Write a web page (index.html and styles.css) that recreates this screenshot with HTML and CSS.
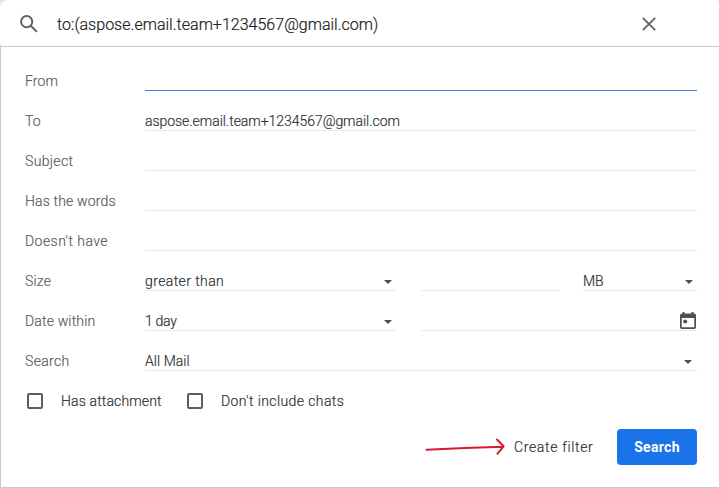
FILE: index.html
```html
<!DOCTYPE html>
<html lang="en">
<head>
<meta charset="utf-8">
<title>Search mail</title>
<link rel="stylesheet" href="styles.css">
</head>
<body>
<header class="searchbar">
  <svg class="icon-search" viewBox="0 0 18 18"><circle cx="6.7" cy="6.7" r="5.6"/><path d="M10.8 10.8L16.9 16.9"/></svg>
  <span class="query">to:(aspose.email.team+1234567@gmail.com)</span>
  <svg class="icon-close" viewBox="0 0 14 14"><path d="M.8.8L13.2 13.2M13.2.8L.8 13.2"/></svg>
</header>
<main class="panel">
  <div class="row"><label class="from">From</label><div class="field active"></div></div>
  <div class="row"><label class="to">To</label><div class="field"><span class="address">aspose.email.team+1234567@gmail.com</span></div></div>
  <div class="row"><label class="subject">Subject</label><div class="field"></div></div>
  <div class="row"><label class="words">Has the words</label><div class="field"></div></div>
  <div class="row"><label class="without">Doesn't have</label><div class="field"></div></div>
  <div class="row"><label class="size">Size</label>
    <div class="field medium"><span class="greater">greater than</span><i class="caret"></i></div>
    <div class="field amount"></div>
    <div class="field unit"><span class="mb">MB</span><i class="caret"></i></div>
  </div>
  <div class="row"><label class="date">Date within</label>
    <div class="field medium"><span class="day">1 day</span><i class="caret"></i></div>
    <div class="field calendar"><svg class="icon-calendar" viewBox="0 0 16 17"><path fill-rule="evenodd" d="M2.5 0h2v1.6h7V0h2v1.6h.7Q16 1.6 16 3.4v11.8Q16 17 14.2 17H1.8Q0 17 0 15.2V3.4Q0 1.600 1.800 1.600h.7zM1.700 6v9.300h12.600V6z"/><circle cx="5.200" cy="9.500" r="2"/></svg></div>
  </div>
  <div class="row"><label class="search-in">Search</label><div class="field"><span class="all">All Mail</span><i class="caret wide"></i></div></div>
  <div class="checks">
    <span class="box"></span><span class="attachment">Has attachment</span>
    <span class="box second"></span><span class="chats">Don't include chats</span>
  </div>
  <div class="actions">
    <svg class="arrow" viewBox="0 0 82 20"><path d="M1.500 12.800Q40 10.800 78 9.800M72 2.500L78.600 9.300L72.500 16.700"/></svg>
    <span class="create">Create filter</span>
    <button class="submit"><span>Search</span></button>
  </div>
</main>
</body>
</html>
```
FILE: styles.css
```css
* { box-sizing: border-box; }
body {
  margin: 0;
  width: 719px;
  height: 488px;
  overflow: hidden;
  background: #e6e7e8;
  color: #303236;
  font: 300 14px/20px Roboto, "Liberation Sans", sans-serif;
  -webkit-text-stroke: .2px currentColor;
}
svg { display: block; fill: none; }
span, label { white-space: nowrap; }
.searchbar {
  display: flex;
  align-items: center;
  height: 46px;
  padding: 2px 63px 0 20px;
  border-radius: 8px 4px 0 4px;
  background: #fff;
}
.icon-search { width: 18px; height: 18px; stroke: #5f6368; stroke-width: 2; }
.query { margin-left: 19px; padding-top: 1px; font-size: 16px; letter-spacing: .02px; color: #202124; }
.icon-close { width: 14px; height: 14px; margin-left: auto; stroke: #5f6368; stroke-width: 1.8; }
.panel {
  height: 442px;
  padding: 14px 22px 0 24px;
  border: solid #c7c8c9;
  border-width: 1px 0 1px 1px;
  background: #fff;
}
.row { display: flex; height: 40px; }
.row label { width: 120px; padding-top: 10px; color: #5a5e63; letter-spacing: .16px; }
.row .subject, .row .search-in { letter-spacing: .35px; }
.row .without { letter-spacing: .45px; }
.field {
  display: flex;
  align-items: center;
  flex: 1;
  height: 30px;
  padding-top: 11px;
  border-bottom: 1px solid #e9eaeb;
}
.field.active { border-bottom-color: #3f83d6; }
.field.medium { flex: 0 0 251px; margin-right: 25px; }
.field.amount { flex: 0 0 139px; margin-right: 23px; }
.field.calendar { align-items: flex-start; justify-content: flex-end; }
.address { letter-spacing: -.04px; }
.greater { letter-spacing: .4px; }
.day { letter-spacing: -.3px; }
.all { letter-spacing: .05px; }
.caret {
  margin: 1px 4px 0 auto;
  border: solid transparent;
  border-width: 4px 4.500px 0;
  border-top-color: #4d5053;
}
.caret.wide { margin-right: 5px; }
.icon-calendar { width: 16px; height: 17px; margin: 0 1px 0 0; fill: #4d5053; }
.checks { display: flex; align-items: center; height: 20px; margin: 10px 0 0 2px; }
.box { width: 16px; height: 16px; border: 2px solid #5b5d60; border-radius: 2px; }
.box + span { margin-left: 18px; }
.attachment { width: 126px; letter-spacing: .14px; }
.chats { letter-spacing: .4px; }
.actions { display: flex; align-items: center; justify-content: flex-end; height: 36px; margin-top: 18px; }
.arrow { width: 82px; height: 20px; margin-right: 7px; stroke: #d9192f; stroke-width: 2; stroke-linecap: round; stroke-linejoin: round; }
.create { width: 79px; margin-right: 24px; letter-spacing: .65px; }
.submit { width: 80px; height: 36px; padding: 0; border: 0; border-radius: 4px; background: #1a73e8; color: #fff; font: 700 14px/20px Roboto, sans-serif; letter-spacing: .3px; -webkit-text-stroke: 0; }
```
